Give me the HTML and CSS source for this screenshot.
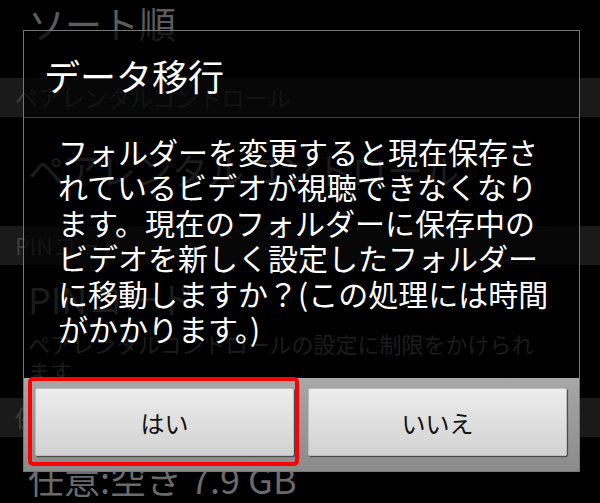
FILE: index.html
```html
<!DOCTYPE html>
<html lang="ja">
<head>
<meta charset="utf-8">
<title>データ移行</title>
<link rel="stylesheet" href="styles.css">
</head>
<body>
<div class="screen">
  <div class="pref pref-top"><div class="pref-title">ソート順</div></div>
  <div class="cat">ペアレンタルコントロール</div>
  <div class="pref pref-single"><div class="pref-title">ペアレンタルコントロール</div></div>
  <div class="cat">PINコード</div>
  <div class="pref pref-double">
    <div class="pref-title">PINコード</div>
    <div class="pref-summary">ペアレンタルコントロールの設定に制限をかけられ<br>ます</div>
  </div>
  <div class="cat">保存先</div>
  <div class="pref pref-last"><div class="pref-title">任意:空き 7.9 GB</div></div>
</div>

<div class="dialog">
  <div class="dialog-title">データ移行</div>
  <div class="dialog-message">フォルダーを変更すると現在保存さ<br>れているビデオが視聴できなくなり<br>ます。現在のフォルダーに保存中の<br>ビデオを新しく設定したフォルダー<br>に移動しますか？(この処理には時間<br>がかかります。)</div>
  <div class="dialog-buttons">
    <button class="btn">はい</button>
    <button class="btn">いいえ</button>
    <span class="highlight"></span>
  </div>
</div>
</body>
</html>
```

FILE: styles.css
```css
html, body {
  margin: 0;
  padding: 0;
  background: #000;
}
body {
  width: 600px;
  height: 503px;
  overflow: hidden;
  position: relative;
  font-family: "Noto Sans CJK JP", "Noto Sans", sans-serif;
}
.screen {
  display: flex;
  flex-direction: column;
}
.pref {
  box-sizing: border-box;
  padding-left: 28px;
  padding-right: 20px;
  color: #5c5c5c;
}
.pref-title {
  font-size: 37px;
  line-height: 40px;
  white-space: nowrap;
}
.pref-top {
  height: 78px;
  padding-top: 3px;
}
.pref-single {
  height: 109px;
  padding-top: 32px;
}
.pref-single .pref-title,
.pref-double .pref-title,
.pref-last .pref-title {
  font-size: 36px;
}
.pref-double {
  height: 133px;
  padding-top: 13px;
}
.pref-summary {
  margin-top: 12px;
  font-size: 22px;
  line-height: 27px;
  white-space: nowrap;
}
.pref-last {
  padding-top: 21px;
  color: #6a6a6a;
}
.cat {
  height: 39px;
  line-height: 39px;
  font-size: 23px;
  padding-left: 15px;
  background: #1a1a1a;
  color: #3e3e3e;
  white-space: nowrap;
  overflow: hidden;
}

.dialog {
  position: absolute;
  left: 23px;
  top: 30px;
  width: 557px;
  box-sizing: border-box;
  border: 1px solid #777;
  background: rgba(0, 0, 0, 0.55);
  color: #fff;
}
.dialog-title {
  height: 83px;
  padding-top: 3px;
  padding-left: 20px;
  font-size: 36px;
  line-height: 83px;
  border-bottom: 1px solid #404040;
  background: rgba(0, 0, 0, 0.3);
}
.dialog-message {
  padding: 16px 0 31.6px 34px;
  font-size: 30px;
  line-height: 35.4px;
  white-space: nowrap;
  background: rgba(0, 0, 0, 0.3);
}
.dialog-buttons {
  position: relative;
  display: flex;
  gap: 14px;
  padding: 10px 12px 15px 11px;
  background: linear-gradient(#a7a7a7, #8b8b8b);
}
.btn {
  flex: 1;
  height: 68px;
  margin: 0;
  padding: 0;
  border: 1px solid #bdbdbd;
  border-radius: 2px;
  background: linear-gradient(#ececec, #d2d2d2);
  box-shadow: 1px 1px 1px rgba(0, 0, 0, 0.55);
  font-family: "Noto Sans CJK JP", "Noto Sans", sans-serif;
  font-size: 24px;
  color: #111;
}
.highlight {
  position: absolute;
  left: 4px;
  top: -1px;
  width: 271px;
  height: 89px;
  box-sizing: border-box;
  border: 4px solid #ff0000;
  border-radius: 5px;
  pointer-events: none;
}
```
